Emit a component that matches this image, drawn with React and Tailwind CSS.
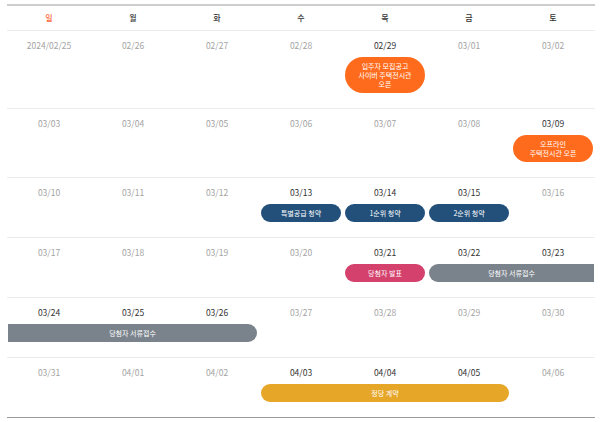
import React from 'react';

const DAYS = ['일', '월', '화', '수', '목', '금', '토'];

// each week: dates (active = has schedule), events placed by column span
const WEEKS = [
  {
    dates: [['2024/02/25'], ['02/26'], ['02/27'], ['02/28'], ['02/29', true], ['03/01'], ['03/02']],
    events: [{ col: 'col-start-5 col-span-1', color: 'bg-[#ff6b1c]', lines: ['입주자 모집공고', '사이버 주택전시관', '오픈'] }],
  },
  {
    dates: [['03/03'], ['03/04'], ['03/05'], ['03/06'], ['03/07'], ['03/08'], ['03/09', true]],
    events: [{ col: 'col-start-7 col-span-1', color: 'bg-[#ff6b1c]', lines: ['오프라인', '주택전시관 오픈'] }],
  },
  {
    dates: [['03/10'], ['03/11'], ['03/12'], ['03/13', true], ['03/14', true], ['03/15', true], ['03/16']],
    events: [
      { col: 'col-start-4 col-span-1', color: 'bg-[#22507a]', lines: ['특별공급 청약'] },
      { col: 'col-start-5 col-span-1', color: 'bg-[#22507a]', lines: ['1순위 청약'] },
      { col: 'col-start-6 col-span-1', color: 'bg-[#22507a]', lines: ['2순위 청약'] },
    ],
  },
  {
    dates: [['03/17'], ['03/18'], ['03/19'], ['03/20'], ['03/21', true], ['03/22', true], ['03/23', true]],
    events: [
      { col: 'col-start-5 col-span-1', color: 'bg-[#d4416c]', lines: ['당첨자 발표'] },
      { col: 'col-start-6 col-span-2', color: 'bg-[#7a838c]', lines: ['당첨자 서류접수'], cont: 'right' },
    ],
  },
  {
    dates: [['03/24', true], ['03/25', true], ['03/26', true], ['03/27'], ['03/28'], ['03/29'], ['03/30']],
    events: [{ col: 'col-start-1 col-span-3', color: 'bg-[#7a838c]', lines: ['당첨자 서류접수'], cont: 'left' }],
  },
  {
    dates: [['03/31'], ['04/01'], ['04/02'], ['04/03', true], ['04/04', true], ['04/05', true], ['04/06']],
    events: [{ col: 'col-start-4 col-span-3', color: 'bg-[#e6a628]', lines: ['정당 계약'] }],
  },
];

function EventPill({ ev }) {
  let shape = 'rounded-full mx-[2px]';
  if (ev.cont === 'right') shape = 'rounded-l-full ml-[2px] mr-[1px]';
  if (ev.cont === 'left') shape = 'rounded-r-full ml-[1px] mr-[2px]';
  return (
    <div className={`${ev.col} row-start-2 mt-[6px] ${shape} ${ev.color} py-[4.5px] text-center text-[7px] leading-[9px] text-white`}>
      {ev.lines.map((l, i) => (
        <div key={i}>{l}</div>
      ))}
    </div>
  );
}

export default function App() {
  return (
    <div
      className="w-[600px] h-[422px] bg-white pl-[7px] pt-[4px]"
      style={{ fontFamily: '"Noto Sans CJK KR", "Noto Sans", sans-serif' }}
    >
      <div className="w-[588px] border-t-2 border-[#cdcdcd] border-b border-b-[#9a9a9a]">
        <div className="grid grid-cols-7 h-[25px] items-center border-b border-[#ececec] text-[8px] font-medium">
          {DAYS.map((d, i) => (
            <div key={d} className={`text-center ${i === 0 ? 'text-[#ff6a3d]' : 'text-[#333333]'}`}>
              {d}
            </div>
          ))}
        </div>
        {WEEKS.map((w, wi) => (
          <div
            key={wi}
            className={`grid grid-cols-7 pt-[8px] pb-[15px] ${wi < WEEKS.length - 1 ? 'border-b border-[#ececec]' : ''}`}
          >
            {w.dates.map(([d, active], di) => (
              <div
                key={di}
                className={`row-start-1 text-center text-[8.5px] leading-[12px] ${active ? 'text-[#333333]' : 'text-[#a3a3a3]'}`}
              >
                {d}
              </div>
            ))}
            {w.events.map((ev, ei) => (
              <EventPill key={ei} ev={ev} />
            ))}
          </div>
        ))}
      </div>
    </div>
  );
}
